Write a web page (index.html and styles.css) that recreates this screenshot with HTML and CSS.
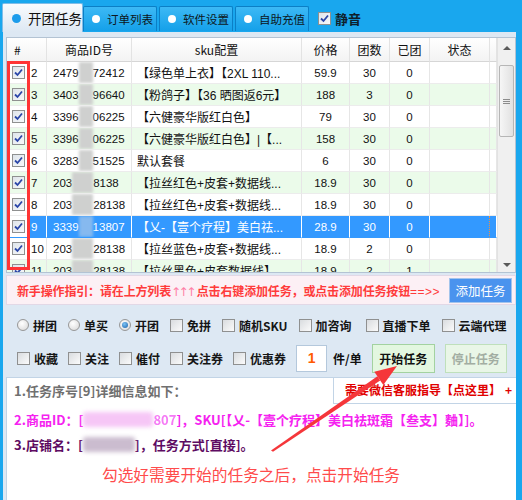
FILE: index.html
```html
<!DOCTYPE html>
<html lang="zh-CN">
<head>
<meta charset="utf-8">
<title>开团任务</title>
<link rel="stylesheet" href="styles.css">
</head>
<body>
<div class="win">
  <div class="tabbar">
    <div class="tab active"><span class="dot"></span>开团任务</div>
    <div class="tab"><span class="dot"></span>订单列表</div>
    <div class="tab"><span class="dot"></span>软件设置</div>
    <div class="tab"><span class="dot"></span>自助充值</div>
    <label class="mute"><span class="cb on"><svg viewBox="0 0 11 11" width="11" height="11"><path d="M2 5.5 L4.5 8 L9 2.5" fill="none" stroke="#2b46a8" stroke-width="1.8"/></svg></span>静音</label>
  </div>

  <div class="main">
    <div class="grid">
      <div class="list">
        <div class="row head">
          <div class="c c1h">#</div>
          <div class="c ch">商品ID号</div>
          <div class="c ch">sku配置</div>
          <div class="c ch">价格</div>
          <div class="c ch">团数</div>
          <div class="c ch">已团</div>
          <div class="c ch">状态</div>
          <div class="c ch"></div>
        </div>
        <div class="body">
          <div class="row">
            <div class="c c1"><span class="ckw"><span class="cb on"><svg viewBox="0 0 11 11" width="11" height="11"><path d="M2 5.5 L4.5 8 L9 2.5" fill="none" stroke="#2b46a8" stroke-width="1.8"/></svg></span></span><span class="no">2</span></div>
            <div class="c id">2479<span class="mask"></span>72412</div>
            <div class="c sku">【绿色单上衣】【2XL 110...</div>
            <div class="c n">59.9</div><div class="c n">30</div><div class="c n">0</div><div class="c"></div><div class="c"></div>
          </div>
          <div class="row alt">
            <div class="c c1"><span class="ckw"><span class="cb on"><svg viewBox="0 0 11 11" width="11" height="11"><path d="M2 5.5 L4.5 8 L9 2.5" fill="none" stroke="#2b46a8" stroke-width="1.8"/></svg></span></span><span class="no">3</span></div>
            <div class="c id">3403<span class="mask"></span>96640</div>
            <div class="c sku">【粉鸽子】【36 晒图返6元】</div>
            <div class="c n">188</div><div class="c n">3</div><div class="c n">0</div><div class="c"></div><div class="c"></div>
          </div>
          <div class="row">
            <div class="c c1"><span class="ckw"><span class="cb on"><svg viewBox="0 0 11 11" width="11" height="11"><path d="M2 5.5 L4.5 8 L9 2.5" fill="none" stroke="#2b46a8" stroke-width="1.8"/></svg></span></span><span class="no">4</span></div>
            <div class="c id">3396<span class="mask"></span>06225</div>
            <div class="c sku">【六健豪华版红白色】</div>
            <div class="c n">79</div><div class="c n">30</div><div class="c n">0</div><div class="c"></div><div class="c"></div>
          </div>
          <div class="row alt">
            <div class="c c1"><span class="ckw"><span class="cb on"><svg viewBox="0 0 11 11" width="11" height="11"><path d="M2 5.5 L4.5 8 L9 2.5" fill="none" stroke="#2b46a8" stroke-width="1.8"/></svg></span></span><span class="no">5</span></div>
            <div class="c id">3396<span class="mask"></span>06225</div>
            <div class="c sku">【六健豪华版红白色】|【...</div>
            <div class="c n">158</div><div class="c n">30</div><div class="c n">0</div><div class="c"></div><div class="c"></div>
          </div>
          <div class="row">
            <div class="c c1"><span class="ckw"><span class="cb on"><svg viewBox="0 0 11 11" width="11" height="11"><path d="M2 5.5 L4.5 8 L9 2.5" fill="none" stroke="#2b46a8" stroke-width="1.8"/></svg></span></span><span class="no">6</span></div>
            <div class="c id">3283<span class="mask"></span>51525</div>
            <div class="c sku">默认套餐</div>
            <div class="c n">6</div><div class="c n">30</div><div class="c n">0</div><div class="c"></div><div class="c"></div>
          </div>
          <div class="row alt">
            <div class="c c1"><span class="ckw"><span class="cb on"><svg viewBox="0 0 11 11" width="11" height="11"><path d="M2 5.5 L4.5 8 L9 2.5" fill="none" stroke="#2b46a8" stroke-width="1.8"/></svg></span></span><span class="no">7</span></div>
            <div class="c id">203<span class="mask wide"></span>8138</div>
            <div class="c sku">【拉丝红色+皮套+数据线...</div>
            <div class="c n">18.9</div><div class="c n">30</div><div class="c n">0</div><div class="c"></div><div class="c"></div>
          </div>
          <div class="row">
            <div class="c c1"><span class="ckw"><span class="cb on"><svg viewBox="0 0 11 11" width="11" height="11"><path d="M2 5.5 L4.5 8 L9 2.5" fill="none" stroke="#2b46a8" stroke-width="1.8"/></svg></span></span><span class="no">8</span></div>
            <div class="c id">203<span class="mask wide"></span>28138</div>
            <div class="c sku">【拉丝红色+皮套+数据线...</div>
            <div class="c n">18.9</div><div class="c n">30</div><div class="c n">0</div><div class="c"></div><div class="c"></div>
          </div>
          <div class="row sel">
            <div class="c c1"><span class="ckw"><span class="cb on"><svg viewBox="0 0 11 11" width="11" height="11"><path d="M2 5.5 L4.5 8 L9 2.5" fill="none" stroke="#2b46a8" stroke-width="1.8"/></svg></span></span><span class="no">9</span></div>
            <div class="c id">3339<span class="mask"></span>13807</div>
            <div class="c sku">【乂-【壹个疗程】美白祛...</div>
            <div class="c n">28.9</div><div class="c n">30</div><div class="c n">0</div><div class="c focus"></div><div class="c"></div>
          </div>
          <div class="row">
            <div class="c c1"><span class="ckw"><span class="cb on"><svg viewBox="0 0 11 11" width="11" height="11"><path d="M2 5.5 L4.5 8 L9 2.5" fill="none" stroke="#2b46a8" stroke-width="1.8"/></svg></span></span><span class="no">10</span></div>
            <div class="c id">203<span class="mask wide"></span>28138</div>
            <div class="c sku">【拉丝蓝色+皮套+数据线...</div>
            <div class="c n">18.9</div><div class="c n">2</div><div class="c n">0</div><div class="c"></div><div class="c"></div>
          </div>
          <div class="row alt">
            <div class="c c1"><span class="ckw"><span class="cb on"><svg viewBox="0 0 11 11" width="11" height="11"><path d="M2 5.5 L4.5 8 L9 2.5" fill="none" stroke="#2b46a8" stroke-width="1.8"/></svg></span></span><span class="no">11</span></div>
            <div class="c id">203<span class="mask wide"></span>28138</div>
            <div class="c sku">【拉丝黑色+皮套数据线】</div>
            <div class="c n">18.9</div><div class="c n">2</div><div class="c n">1</div><div class="c"></div><div class="c"></div>
          </div>
        </div>
      </div>
      <div class="vscroll">
        <div class="sbbtn"><span class="tri up"></span></div>
        <div class="thumb"><span class="grip"></span><span class="grip"></span><span class="grip"></span></div>
        <div class="sbfill"></div>
        <div class="sbbtn low"><span class="tri down"></span></div>
      </div>
      <div class="redbox"></div>
    </div>

    <div class="guide">
      <span class="guidetext">新手操作指引：请在上方列表<span class="ups">↑↑↑</span>点击右键添加任务，或点击添加任务按钮<span class="eq">==&gt;&gt;</span></span>
      <button class="addbtn">添加任务</button>
    </div>

    <div class="controls">
      <div class="opts r1">
        <label class="opt"><span class="rd"></span>拼团</label>
        <label class="opt"><span class="rd"></span>单买</label>
        <label class="opt"><span class="rd on"><span class="rdin"></span></span>开团</label>
        <label class="opt"><span class="cb"></span>免拼</label>
        <label class="opt"><span class="cb"></span>随机SKU</label>
        <label class="opt"><span class="cb"></span>加咨询</label>
        <label class="opt live"><span class="cb"></span>直播下单</label>
        <label class="opt"><span class="cb"></span>云端代理</label>
      </div>
      <div class="opts r2">
        <label class="opt"><span class="cb"></span>收藏</label>
        <label class="opt"><span class="cb"></span>关注</label>
        <label class="opt"><span class="cb"></span>催付</label>
        <label class="opt"><span class="cb"></span>关注券</label>
        <label class="opt"><span class="cb"></span>优惠券</label>
        <span class="qty">1</span>
        <span class="unit">件/单</span>
        <button class="btn go">开始任务</button>
        <button class="btn stop">停止任务</button>
      </div>
    </div>

    <div class="info">
      <div class="help">需要微信客服指导【点这里】<span class="plus">+</span></div>
      <p class="l1">1.任务序号[9]详细信息如下：</p>
      <p class="l2">2.商品ID：[<span class="smear pink"></span><span class="faint">807</span>]，SKU[【乂-【壹个疗程】美白祛斑霜【叁支】麯】]。</p>
      <p class="l3">3.店铺名：[<span class="smear mauve"></span>]，任务方式[直接]。</p>
      <p class="hint">勾选好需要开始的任务之后，点击开始任务</p>
    </div>
  </div>

  <svg class="arrow" width="522" height="500" viewBox="0 0 522 500">
    <polygon points="271,450.5 273,451.8 380.2,380.5 377.4,376.3" fill="#f5363a"/>
    <polygon points="397,366 383.3,385 374.3,371.8" fill="#f5363a"/>
  </svg>
</div>
</body>
</html>
```
FILE: styles.css
```css
* { box-sizing: border-box; margin: 0; padding: 0; }
html, body { width: 522px; height: 500px; overflow: hidden; }
body {
  font-family: "Noto Sans CJK SC", "Liberation Sans", sans-serif;
  font-size: 12px;
  color: #111;
  background: #19a7ee;
}
.win { position: relative; width: 522px; height: 500px; background: #19a7ee; }

/* tabs */
.tabbar { height: 32px; display: flex; align-items: flex-end; padding-left: 2px; }
.tab {
  height: 25px; margin: 0 2px 1px 0; padding: 0 3px 0 8px;
  display: flex; align-items: center;
  background: linear-gradient(#3db9f5, #14a0e9);
  border: 1px solid #0b7fc6; border-bottom: none;
  border-radius: 2px 2px 0 0;
  font-size: 11.5px; color: #0d1620;
}
.tab .dot { width: 8px; height: 8px; border-radius: 50%; background: #fff; margin-right: 7px; flex: none; }
.tab.active {
  height: 29px; margin: 0; padding: 0 0 0 9px;
  background: linear-gradient(#f8fbfe, #dde8f3);
  border-color: #7fbde8; font-size: 13.5px; color: #111;
}
.tab.active .dot { width: 9px; height: 9px; background: #1c9ceb; margin-right: 7px; }
.mute {
  display: flex; align-items: center; gap: 4px;
  margin: 0 0 4px 7px; height: 20px;
  font-weight: bold; font-size: 13px; color: #0e1e2c;
}

/* check boxes / radios */
.cb {
  width: 13px; height: 13px; flex: none;
  display: inline-flex; align-items: center; justify-content: center;
  border: 1px solid #8f9090;
  background: linear-gradient(135deg, #d9dcdf, #fbfbfb);
}
.cb.on { background: linear-gradient(135deg, #dfe4ea, #f7f9fb); }
.rd {
  width: 12px; height: 12px; flex: none; border-radius: 50%;
  border: 1px solid #979797;
  background: radial-gradient(circle at 40% 35%, #ffffff, #d6d6d6);
  display: inline-flex; align-items: center; justify-content: center;
}
.rdin {
  width: 6px; height: 6px; border-radius: 50%;
  background: radial-gradient(circle at 40% 35%, #7cc4f6, #1b5fa8);
}

/* main */
.main { margin: 0 6px 0 3px; height: 468px; background: #dde8f3; padding: 5px 0 0 3px; }
.grid {
  position: relative; display: flex;
  height: 236px; border: 1px solid #b3c3d3; background: #fff;
}
.list { width: 490px; overflow: hidden; font-family: "Liberation Sans", "Noto Sans CJK SC", sans-serif; }
.body { height: 210px; overflow: hidden; }
.row {
  display: grid;
  grid-template-columns: 40px 85px 170px 48px 40px 40px 60px 7px;
  height: 22px;
}
.c {
  display: flex; align-items: center;
  border-right: 1px solid #e6e6e6; border-bottom: 1px solid #ececec;
  white-space: nowrap; overflow: hidden;
}
.row.head { height: 24px; background: linear-gradient(#ffffff, #f3f3f3); }
.row.head .c { border-bottom: 1px solid #d6d6d6; border-right-color: #e3e3e3; font-family: "Noto Sans CJK SC", sans-serif; font-size: 12px; }
.c1h { padding-left: 7px; }
.ch { justify-content: center; }
.row.alt { background: #ebfbea; }
.ckw { width: 22px; height: 100%; display: flex; align-items: center; justify-content: center; flex: none; }
.no { padding-left: 2px; font-size: 11.5px; }
.id { padding-left: 6px; font-size: 11.5px; }
.sku { padding-left: 5px; font-size: 12px; }
.n { justify-content: center; font-size: 11.5px; }
.mask {
  display: inline-block; width: 14px; height: 21px;
  background: #cfd0cf; filter: blur(1.5px);
}
.mask.wide { width: 21px; }
.row.sel .c { background: #3399ff; color: #fff; border-right-color: #ffffff; border-bottom-color: #3399ff; }
.row.sel .ckw { background: #fff; }
.row.sel .mask { background: #86b9ef; }
.row.sel .c.focus { border-right: 1px dotted #f09040; }

/* scrollbar */
.vscroll {
  width: 18px; background: #f0f0f0; border-left: 1px solid #e2e2e2;
  display: flex; flex-direction: column; align-items: center;
}
.sbbtn { height: 20px; width: 100%; display: flex; align-items: center; justify-content: center; }
.sbbtn.low { height: 14px; }
.tri { width: 0; height: 0; border-left: 4px solid transparent; border-right: 4px solid transparent; }
.tri.up { border-bottom: 4px solid #5a5a5a; }
.tri.down { border-top: 4px solid #5a5a5a; }
.thumb {
  margin-top: 7px; width: 15px; height: 72px;
  border: 1px solid #b6b6b6; border-radius: 2px;
  background: linear-gradient(90deg, #f6f6f6, #e1e1e1);
  display: flex; flex-direction: column; align-items: center; justify-content: center; gap: 1px;
}
.grip { width: 7px; height: 1px; background: #8c8c8c; }
.sbfill { flex: 1; }
.redbox {
  position: absolute; left: 0; top: 23px; width: 23px; height: 209px;
  border: 3px solid #ff3535;
}

/* guide */
.guide {
  margin-top: 2px; height: 30px;
  display: flex; align-items: center; justify-content: space-between;
  background: #fcf0f5; border: 1px solid #e2d8e6; padding: 0 3px 0 10px;
}
.guidetext { font-weight: bold; font-size: 12px; color: #ff3b3b; white-space: nowrap; letter-spacing: -0.15px; }
.ups { color: #ff7fa6; font-family: "DejaVu Sans", sans-serif; font-size: 12px; font-weight: normal; letter-spacing: -2.5px; margin-right: 3px; }
.eq { font-family: "Liberation Sans", sans-serif; font-weight: normal; letter-spacing: 0.5px; }
.addbtn {
  width: 63px; height: 25px;
  background: #4a93ee; border: 1px solid #a3c4ec;
  color: #fff; font-family: "Noto Sans CJK SC", sans-serif; font-size: 12.5px;
}

/* controls */
.controls { height: 72px; padding: 10px 0 0 11px; }
.opts { display: flex; align-items: center; gap: 11px; height: 20px; }
.opts.r2 { gap: 10px; height: 30px; margin-top: 8px; }
.opt { display: flex; align-items: center; gap: 4px; font-weight: bold; font-size: 12px; color: #151515; white-space: nowrap; }
.opt.live { margin-left: 3px; }
.qty {
  width: 31px; height: 27px; background: #fff; border: 1px solid #b4c8dc;
  display: flex; align-items: center; justify-content: center;
  font-family: "Liberation Sans", sans-serif; font-weight: bold; font-size: 14px; color: #ff5a00;
}
.unit { margin-left: -4px; font-weight: bold; font-size: 12px; }
.btn {
  width: 63px; height: 29px;
  font-family: "Noto Sans CJK SC", sans-serif; font-weight: bold; font-size: 12px;
}
.btn.go { background: #e3f7e0; border: 1px solid #a3d2a0; color: #111; }
.btn.stop { width: 62px; background: #e9f6e7; border: 1px solid #bfe0bb; color: #a2ada2; }

/* info */
.info {
  height: 123px; background: #fff;
  border-top: 1px solid #c2d4e6; border-left: 1px solid #c2d4e6;
  padding-left: 7px;
  font-weight: bold; font-size: 13px;
}
.help {
  float: right; width: 183px; height: 26px;
  border-left: 1px solid #c2d4e6; border-bottom: 1px solid #c2d4e6;
  padding-left: 11px; line-height: 24px;
  color: #e00000; font-size: 12px; white-space: nowrap;
}
.plus { margin-left: 4px; }
.l1 { padding-top: 3px; line-height: 20px; color: #707070; }
.l2 { margin-top: 9px; line-height: 20px; color: #f522f0; white-space: nowrap; }
.l3 { margin-top: 5px; line-height: 20px; color: #5e0b62; white-space: nowrap; }
.smear { display: inline-block; height: 15px; vertical-align: -2px; border-radius: 3px; filter: blur(2px); }
.smear.pink { width: 70px; background: #f6c6f6; }
.smear.mauve { width: 52px; background: #cbbccf; }
.faint { color: #f57af5; filter: blur(0.6px); }
.hint { clear: both; margin: 9px 0 0 88px; font-weight: normal; font-size: 15.7px; line-height: 22px; color: #ff4b4b; white-space: nowrap; }

.arrow { position: absolute; left: 0; top: 0; pointer-events: none; }
```
